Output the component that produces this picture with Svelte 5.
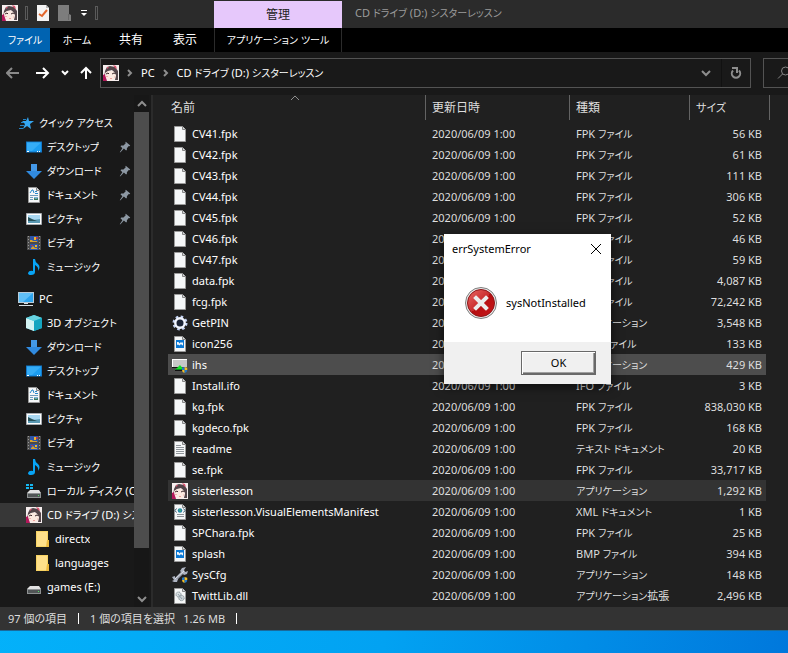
<script>
  // Quick access and drive tree on the left
  const quickAccess = [
    { label: 'デスクトップ', icon: 'desktop', pinned: true },
    { label: 'ダウンロード', icon: 'download', pinned: true },
    { label: 'ドキュメント', icon: 'document', pinned: true },
    { label: 'ピクチャ', icon: 'picture', pinned: true },
    { label: 'ビデオ', icon: 'video' },
    { label: 'ミュージック', icon: 'music' }
  ];

  const computer = [
    { label: '3D オブジェクト', icon: 'cube' },
    { label: 'ダウンロード', icon: 'download' },
    { label: 'デスクトップ', icon: 'desktop' },
    { label: 'ドキュメント', icon: 'document' },
    { label: 'ピクチャ', icon: 'picture' },
    { label: 'ビデオ', icon: 'video' },
    { label: 'ミュージック', icon: 'music' },
    { label: 'ローカル ディスク (C:)', icon: 'system' },
    { label: 'CD ドライブ (D:) シスターレッスン', icon: 'face', current: true },
    { label: 'directx', icon: 'folder', nested: true },
    { label: 'languages', icon: 'folder', nested: true },
    { label: 'games (E:)', icon: 'drive' },
    { label: 'home (\\\\Pan-Server)', icon: 'drive' }
  ];

  const date = '2020/06/09 1:00';
  const FPK = 'FPK ファイル';
  const APP = 'アプリケーション';

  const files = [
    { name: 'CV41.fpk', type: FPK, size: '56 KB', icon: 'file' },
    { name: 'CV42.fpk', type: FPK, size: '61 KB', icon: 'file' },
    { name: 'CV43.fpk', type: FPK, size: '111 KB', icon: 'file' },
    { name: 'CV44.fpk', type: FPK, size: '306 KB', icon: 'file' },
    { name: 'CV45.fpk', type: FPK, size: '52 KB', icon: 'file' },
    { name: 'CV46.fpk', type: FPK, size: '46 KB', icon: 'file' },
    { name: 'CV47.fpk', type: FPK, size: '59 KB', icon: 'file' },
    { name: 'data.fpk', type: FPK, size: '4,087 KB', icon: 'file' },
    { name: 'fcg.fpk', type: FPK, size: '72,242 KB', icon: 'file' },
    { name: 'GetPIN', type: APP, size: '3,548 KB', icon: 'gear' },
    { name: 'icon256', type: 'PNG ファイル', size: '133 KB', icon: 'image' },
    { name: 'ihs', type: APP, size: '429 KB', icon: 'installer', hover: true },
    { name: 'Install.ifo', type: 'IFO ファイル', size: '3 KB', icon: 'file' },
    { name: 'kg.fpk', type: FPK, size: '838,030 KB', icon: 'file' },
    { name: 'kgdeco.fpk', type: FPK, size: '168 KB', icon: 'file' },
    { name: 'readme', type: 'テキスト ドキュメント', size: '20 KB', icon: 'text' },
    { name: 'se.fpk', type: FPK, size: '33,717 KB', icon: 'file' },
    { name: 'sisterlesson', type: APP, size: '1,292 KB', icon: 'face', selected: true },
    { name: 'sisterlesson.VisualElementsManifest', type: 'XML ドキュメント', size: '1 KB', icon: 'xml' },
    { name: 'SPChara.fpk', type: FPK, size: '25 KB', icon: 'file' },
    { name: 'splash', type: 'BMP ファイル', size: '394 KB', icon: 'image' },
    { name: 'SysCfg', type: APP, size: '148 KB', icon: 'wrench' },
    { name: 'TwittLib.dll', type: 'アプリケーション拡張', size: '2,496 KB', icon: 'dll' }
  ];

  let dialogOpen = $state(true);

  function closeDialog() {
    dialogOpen = false;
  }

  // Katakana is set one size below latin and kanji, so cut a label into runs
  function runs(label) {
    return label.split(/([ァ-ヺー]+)/).filter((part) => part !== '');
  }
</script>

{#snippet text(label)}{#each runs(label) as part}{#if /^[ァ-ヺー]/.test(part)}<span class="kana">{part}</span>{:else}{part}{/if}{/each}{/snippet}

{#snippet sheet()}
  <path d="M2.5.5h8l3 3v12h-11z" fill="#f5f7f8" stroke="#9a9a9a" />
  <path d="M10.5.5v3h3" fill="#d5d8da" stroke="#858585" />
{/snippet}

{#snippet shield()}
  <path d="M8 9l3.500-1v4H8z" fill="#2478c8" />
  <path d="M11.500 8L15 9v3h-3.500z" fill="#f6bf26" />
  <path d="M8 12h3.500v4Q8 15 8 12z" fill="#f6bf26" />
  <path d="M11.500 12H15q0 3-3.500 4z" fill="#2478c8" />
{/snippet}

{#snippet icon(name)}
  <svg class="icon" viewBox="0 0 16 16" width="16" height="16" aria-hidden="true">
    {#if name === 'file'}
      {@render sheet()}
    {:else if name === 'text'}
      {@render sheet()}
      <path d="M4 4.500h5M4 6.500h8M4 8.500h8M4 10.500h8M4 12.500h8" stroke="#8e9499" />
    {:else if name === 'image'}
      {@render sheet()}
      <path d="M4 4h8v8H4z" fill="#0a78d4" />
      <path d="M5 6l1.500 0 1 1.500L9 6l1 1 1-1v3.500L10 9 9 8 7.500 9.500 6 8.500 5 9z" fill="#f2f8fd" />
    {:else if name === 'xml'}
      {@render sheet()}
      <path d="M4.500 4.500L3 6.500l1.500 2M11.500 4.500l1.500 2-1.500 2" fill="none" stroke="#39576d" />
      <circle cx="8" cy="6.500" r="2.300" fill="#2887a8" />
      <path d="M7 5l2 1-1 2z" fill="#4cbf6b" />
      <path d="M5 10.500h7M5 12.500h7" stroke="#8c9196" />
    {:else if name === 'dll'}
      {@render sheet()}
      <circle cx="6.500" cy="6.500" r="2.500" fill="#d9dfe2" stroke="#7c8990" stroke-dasharray="1 .5" />
      <circle cx="9.500" cy="10" r="2.700" fill="#cbd2d6" stroke="#7c8990" stroke-dasharray="1 .5" />
      <path d="M6 6l4 5" stroke="#8fa0aa" />
    {:else if name === 'gear'}
      <circle cx="8" cy="8" r="6" fill="none" stroke="#c3d2f4" stroke-width="3" stroke-dasharray="2.400 2.300" />
      <circle cx="8" cy="8" r="4.700" fill="#1b2437" stroke="#f1f5ff" stroke-width="2.400" />
    {:else if name === 'installer'}
      <path d="M0 2h15v8H0z" fill="#c7c7c7" />
      <path d="M0 2h15v1H1v7H0z" fill="#fff" />
      <path d="M0 10h10v1H0zM3 13h9v1H3z" fill="#111" />
      <path d="M3 13l5-5 4 5z" fill="#14e326" />
      <path d="M4 12h8v1H3z" fill="#098a21" />
      <g transform="translate(4 4) scale(.75)">
        {@render shield()}
      </g>
    {:else if name === 'wrench'}
      <path d="M3 13L12 4" stroke="#959ba9" stroke-width="3" />
      <path d="M10 1l4-1-2 3 1 2 3-1-1 3-3 1-4-4zM0 10l3-1 0 2 1 1 2 0-1 3-3 0-2-1 2-1z" fill="#aeb4c2" />
      <path d="M3 12L12 4" stroke="#e0e3ea" />
      <g transform="translate(4 4) scale(.75)">
        {@render shield()}
      </g>
    {:else if name === 'face'}
      <path d="M0 0h16v16H0z" fill="#f6eeee" />
      <path d="M2 6L4 2l3-1 5 1 3 4v9h-3l1-6-4-4-4 1-3 4-1 3z" fill="#54454a" />
      <path d="M0 10l2-1 2 7H0z" fill="#b3175a" />
      <path d="M4 2l2 0-2 2zM10 0l3 1 1 3-2-1z" fill="#d95470" />
      <path d="M2 8l3-2 5 0 3 4-1 4-5 2-4-3z" fill="#fce9e1" />
      <path d="M3 9l2-1 1 1M9 9l2-1 2 1" fill="none" stroke="#3d292d" />
      <path d="M3 11.500h2M11 12h1" stroke="#f6b4ae" />
      <path d="M7 13h2l-1 1z" fill="#dd575a" />
    {:else if name === 'desktop'}
      <path d="M0 2.500h16v11H0z" fill="#1378c9" />
      <path d="M1 3.500h14v9H1z" fill="#1c9ef2" />
      <path d="M1 3.500h14L6 12H1z" fill="#35adf7" />
      <path d="M1 12.500h2M11 12.500h1M13 12.500h1" stroke="#fff" />
    {:else if name === 'download'}
      <path d="M5 1h6v7h5l-8 8-8-8h5z" fill="#318be0" />
      <path d="M5 1h6v7H5z" fill="#52a4ec" opacity=".6" />
    {:else if name === 'document'}
      {@render sheet()}
      <path d="M4 6l2-3h1l1 3M9 4.500h2M9 6.500h3" fill="none" stroke="#2487cb" />
      <path d="M4 8.500h8M4 10.500h3M4 12.500h3" stroke="#6d9dbe" />
      <path d="M8 10h4v3H8z" fill="#7ab1d4" />
      <path d="M8 11l2 1 2-1v2H8z" fill="#36795a" />
    {:else if name === 'picture'}
      <path d="M.5 2.500h15v11H.5z" fill="#fff" stroke="#a6abb0" />
      <path d="M2 4h12v8H2z" fill="#a9d8f2" />
      <path d="M2 9l5 0 7-1v4H2z" fill="#5b9ab4" />
      <path d="M2 6l4 2 5 2H2z" fill="#28535b" />
    {:else if name === 'video'}
      <path d="M1 1h14v14H1z" fill="#4b4b4b" />
      <path d="M2.500 1v14M13.500 1v14" stroke="#9a9a9a" stroke-dasharray="1 2" />
      <path d="M4 1h8v6H4zM4 9h8v6H4z" fill="#2e56a8" />
      <path d="M4 5h2l1 1h4v1H4zM5 13l2-2 2 2 2 0v1H5z" fill="#d9a02c" />
      <path d="M8 2h2v3H8zM9 10h2v2H9z" fill="#efb52c" />
      <path d="M10 2h2v2h-2zM5 10h2v1H5z" fill="#af3850" />
    {:else if name === 'music'}
      <path d="M7 0h2q0 3 3 5 3 3 0 7 1-4-3-6v7q0 3-4 3-3 0-3-2 1-3 5-2z" fill="#08a4f5" />
    {:else if name === 'cube'}
      <path d="M8 0l8 3v10l-8 3-8-3V3z" fill="#36bfd3" />
      <path d="M0 3l8 3v10l-8-3z" fill="#d3f3f3" />
      <path d="M8 0l8 3-8 3-8-3z" fill="#67d3e0" />
      <path d="M8 6l8-3v10l-8 3z" fill="#15a5c0" />
    {:else if name === 'star'}
      <path d="M10 2l1 4 5 0-4 3 1 5-4-3-4 3 2-5-3-3 4 0z" fill="#35a6f0" />
      <path d="M5 4.500h3M3 7.500h3M2 10.500h4M1 13.500h4" stroke="#2482c4" />
    {:else if name === 'pc'}
      <path d="M0 1h16v11H0z" fill="#b8cad6" />
      <path d="M1 2h14v9H1z" fill="#2da4ee" />
      <path d="M1 2h14L5 11H1z" fill="#60bff6" />
      <path d="M6 12h4v1H6zM1 14h14v1H1z" fill="#d8e1e7" />
    {:else if name === 'drive' || name === 'system'}
      {#if name === 'system'}
        <path d="M0 1h3v2H0zM4 1h3v2H4zM0 4h3v2H0zM4 4h3v2H4z" fill="#16b6ef" />
      {/if}
      <path d="M4 7h9l2 3H1z" fill="#e2e2e2" />
      <path d="M1 10h14v5H1z" fill="#8e9192" />
      <path d="M2 11h12v3H2z" fill="#515556" />
      <path d="M12 12h1v1h-1z" fill="#55e467" />
    {:else if name === 'folder'}
      <path d="M0 0h12v16H0z" fill="#f8d464" />
      <path d="M1 1h10v14H1z" fill="#ffe08a" />
      <path d="M11 9h2v7h-3z" fill="#edba3f" />
    {:else if name === 'pin'}
      <path d="M9 1l6 5-1 1-1-.5-2.500 3v2l-1 1-3-2.500L2 15l-1 0 3.500-5.500L2 7l1-1h3l3-3-.5-1z" fill="#8d98a3" />
    {/if}
  </svg>
{/snippet}

{#snippet chevron(dir)}
  <svg class="chevron" viewBox="0 0 10 10" width="10" height="10" aria-hidden="true">
    {#if dir === 'up'}
      <path d="M1 7l4-4 4 4" />
    {:else if dir === 'right'}
      <path d="M3 2l3 3-3 3" />
    {:else}
      <path d="M1 3l4 4 4-4" />
    {/if}
  </svg>
{/snippet}

{#snippet treeItem(item)}
  <li>
    <a href="#top" class="tree-item" class:nested={item.nested} class:current={item.current}>
      {@render icon(item.icon)}
      <span class="tree-label">{@render text(item.label)}</span>
      {#if item.pinned}
        <span class="pin">{@render icon('pin')}</span>
      {/if}
    </a>
  </li>
{/snippet}

<div class="desktop">
  <div class="explorer">
    <header class="titlebar">
      <div class="quick-tools">
        {@render icon('face')}
        <span class="grip"></span>
        <button class="tool" aria-label="プロパティ">
          <svg viewBox="0 0 12 16" width="12" height="16">
            <path d="M0 0h9l3 3v13H0z" fill="#f4f4f4" />
            <path d="M9 0v3h3" fill="#b9b9b9" />
            <path d="M2 9l3 2 5-6" fill="none" stroke="#e2662c" stroke-width="2" />
          </svg>
        </button>
        <button class="tool" aria-label="新しいフォルダー">
          <svg viewBox="0 0 13 16" width="13" height="16">
            <path d="M0 0h11v9l2 1v6H0z" fill="#7d7d7d" />
            <path d="M10.500 9v6" stroke="#686868" />
          </svg>
        </button>
        <button class="tool" aria-label="カスタマイズ">
          <svg viewBox="0 0 8 8" width="8" height="8">
            <path d="M1 1.500h6" stroke="#fff" />
            <path d="M1 4h6L4 7z" fill="#fff" />
          </svg>
        </button>
        <span class="grip"></span>
      </div>
      <div class="context-tab">管理</div>
      <div class="title">{@render text('CD ドライブ (D:) シスターレッスン')}</div>
    </header>

    <nav class="ribbon">
      <button class="file-tab">ファイル</button>
      <button class="tab">{@render text('ホーム')}</button>
      <button class="tab">共有</button>
      <button class="tab">表示</button>
      <button class="tool-tab">{@render text('アプリケーション ツール')}</button>
    </nav>

    <div class="navbar">
      <div class="history">
        <button class="arrow dim" aria-label="戻る">
          <svg viewBox="0 0 14 12" width="14" height="12"><path d="M13 6H2M6 1L1 6l5 5" /></svg>
        </button>
        <button class="arrow" aria-label="進む">
          <svg viewBox="0 0 14 12" width="14" height="12"><path d="M0 6h12M7 1l5 5-5 5" /></svg>
        </button>
        <button class="arrow" aria-label="最近表示した場所">
          <svg viewBox="0 0 8 8" width="8" height="8"><path d="M1 2l3 3 3-3" /></svg>
        </button>
        <button class="arrow" aria-label="上へ">
          <svg viewBox="0 0 12 14" width="12" height="14"><path d="M6 13V2M1 7l5-5 5 5" /></svg>
        </button>
      </div>
      <div class="address">
        {@render icon('face')}
        {@render chevron('right')}
        <a href="#top">PC</a>
        {@render chevron('right')}
        <a href="#top">{@render text('CD ドライブ (D:) シスターレッスン')}</a>
        <button class="drop" aria-label="以前の場所">{@render chevron('down')}</button>
        <button class="refresh" aria-label="最新の情報に更新">
          <svg viewBox="0 0 12 12" width="12" height="12">
            <path d="M3 3.500a4.200 4.200 0 1 0 6 0" fill="none" stroke="#8e8e8e" stroke-width="2" />
            <path d="M2 1h5v5" fill="none" stroke="#8e8e8e" stroke-width="2" />
          </svg>
        </button>
      </div>
      <button class="search" aria-label="検索">
        <svg viewBox="0 0 14 14" width="14" height="14">
          <circle cx="8.500" cy="5" r="4" fill="none" stroke="#858585" />
          <path d="M5.500 8L1 12.500" stroke="#858585" />
        </svg>
      </button>
    </div>

    <div class="body">
      <aside class="sidebar">
        <div class="tree">
          <a href="#top" class="tree-item root">
            {@render icon('star')}
            <span class="tree-label">{@render text('クイック アクセス')}</span>
          </a>
          <ul>
            {#each quickAccess as item}
              {@render treeItem(item)}
            {/each}
          </ul>
          <a href="#top" class="tree-item root second">
            {@render icon('pc')}
            <span class="tree-label">PC</span>
          </a>
          <ul>
            {#each computer as item}
              {@render treeItem(item)}
            {/each}
          </ul>
        </div>
        <div class="scrollbar">
          <span class="scroll-end">{@render chevron('up')}</span>
          <span class="thumb"></span>
          <span class="scroll-end">{@render chevron('down')}</span>
        </div>
      </aside>

      <main class="files">
        <table>
          <colgroup>
            <col class="col-name" />
            <col class="col-date" />
            <col class="col-type" />
            <col class="col-size" />
          </colgroup>
          <thead>
            <tr>
              <th>名前<span class="sort">{@render chevron('up')}</span></th>
              <th>更新日時</th>
              <th>種類</th>
              <th>{@render text('サイズ')}</th>
            </tr>
          </thead>
          <tbody>
            {#each files as file}
              <tr class:hover={file.hover} class:selected={file.selected}>
                <td><span class="file-name">{@render icon(file.icon)}{file.name}</span></td>
                <td>{date}</td>
                <td>{@render text(file.type)}</td>
                <td class="size">{file.size}</td>
              </tr>
            {/each}
          </tbody>
        </table>
      </main>
    </div>

    <footer class="statusbar">
      <span class="status">97 個の項目</span>
      <span class="status">1 個の項目を選択&ensp; 1.26 MB</span>
    </footer>
  </div>

  {#if dialogOpen}
    <div class="dialog" role="alertdialog" aria-labelledby="dialog-title" aria-describedby="dialog-text">
      <div class="dialog-head">
        <span id="dialog-title">errSystemError</span>
        <button class="close" aria-label="閉じる" onclick={closeDialog}>
          <svg viewBox="0 0 12 12" width="12" height="12"><path d="M1 1l10 10M11 1L1 11" stroke="#000" /></svg>
        </button>
      </div>
      <div class="dialog-body">
        <svg viewBox="0 0 32 32" width="32" height="32" aria-hidden="true">
          <defs>
            <linearGradient id="red" x1="0" y1="0" x2="1" y2="1">
              <stop offset="0" stop-color="#e86a66" />
              <stop offset=".5" stop-color="#c92a2b" />
              <stop offset=".5" stop-color="#b50d10" />
              <stop offset="1" stop-color="#c8191b" />
            </linearGradient>
          </defs>
          <circle cx="16" cy="16" r="15.500" fill="#e9e9e9" stroke="#7e7e7e" />
          <circle cx="16" cy="16" r="13.500" fill="url(#red)" stroke="#8f1517" />
          <path d="M11 11l10 10M21 11l-10 10" stroke="#ececec" stroke-width="4" stroke-linecap="square" />
        </svg>
        <span id="dialog-text">sysNotInstalled</span>
      </div>
      <div class="dialog-foot">
        <button class="ok" onclick={closeDialog}>OK</button>
      </div>
    </div>
  {/if}
</div>

<style>
  :global(body) {
    margin: 0;
    overflow: hidden;
    background: linear-gradient(100deg, #04b5fc 0%, #02a2f2 55%, #0078dc 100%);
  }

  .desktop {
    position: relative;
    min-height: 100vh;
    font-family: "Noto Sans", "Noto Sans CJK JP", sans-serif;
    font-size: 11px;
    line-height: 16px;
    font-feature-settings: "palt";
    color: #fff;
  }

  .kana {
    font-size: 10px;
  }

  .explorer {
    background: #191919;
    border-bottom: 1px solid #1a6a9c;
  }

  button {
    padding: 0;
    border: none;
    background: none;
    color: inherit;
    font: inherit;
    font-feature-settings: inherit;
  }

  a {
    color: inherit;
    text-decoration: none;
  }

  ul {
    margin: 0;
    padding: 0;
    list-style: none;
  }

  svg {
    display: block;
    flex-shrink: 0;
  }

  .chevron path {
    fill: none;
    stroke: #8e8e8e;
    stroke-width: 2;
  }

  /* Title bar */
  .titlebar {
    display: flex;
    height: 28px;
    background: #2b2b2b;
    color: #9b9b9b;
  }

  .quick-tools {
    display: flex;
    align-items: center;
    box-sizing: border-box;
    width: 214px;
    padding: 0 2px 2px;
    gap: 7px;
  }

  .grip {
    width: 1px;
    height: 12px;
    border: 1px solid #5a5a5a;
  }

  .tool {
    margin-left: 2px;
  }

  .context-tab {
    width: 128px;
    margin-top: 1px;
    background: #e6c8fb;
    color: #222;
    font-size: 12px;
    line-height: 27px;
    text-align: center;
  }

  .title {
    padding-left: 13px;
    line-height: 26px;
  }

  /* Ribbon tabs */
  .ribbon {
    display: flex;
    height: 24px;
    background: #000;
  }

  .file-tab {
    width: 50px;
    background: #0063b1;
    font-size: 10px;
  }

  .tab {
    width: 54px;
    font-size: 12px;
  }

  .tool-tab {
    width: 128px;
    margin-left: 2px;
    border: solid #2b2b2b;
    border-width: 0 1px;
  }

  /* Address row */
  .navbar {
    display: flex;
    height: 30px;
    padding: 6px 0 7px;
  }

  .history {
    display: flex;
    align-items: center;
    gap: 11px;
    box-sizing: border-box;
    width: 100px;
    padding-left: 6px;
  }

  .arrow path {
    fill: none;
    stroke: #fff;
    stroke-width: 2;
  }

  .dim {
    margin-right: 5px;
  }

  .dim path {
    stroke: #8a8a8a;
  }

  .address {
    display: flex;
    flex: 1;
    align-items: center;
    gap: 6px;
    padding-left: 2px;
    border: 1px solid #535353;
  }

  .drop {
    margin-left: auto;
    padding-right: 4px;
  }

  .refresh {
    display: flex;
    align-items: center;
    justify-content: center;
    align-self: stretch;
    width: 29px;
    border-left: 1px solid #111;
  }

  .search {
    width: 25px;
    margin-left: 12px;
    padding-left: 13px;
    border: 1px solid #535353;
    border-right: none;
    overflow: hidden;
  }

  .body {
    display: flex;
  }

  /* Folder tree: as tall as the file list, the rest is clipped */
  .sidebar {
    display: flex;
    width: 149px;
    contain: size;
    overflow: hidden;
  }

  .tree {
    flex: 1;
    min-width: 0;
    padding-top: 16px;
    overflow: hidden;
  }

  .tree-item {
    display: flex;
    align-items: center;
    gap: 5px;
    height: 24px;
    padding-left: 26px;
    white-space: nowrap;
  }

  .root {
    padding-left: 18px;
  }

  .second {
    margin-top: 8px;
  }

  .nested {
    padding-left: 36px;
    gap: 3px;
  }

  .current {
    background: #373737;
  }

  .tree-label {
    overflow: hidden;
  }

  .pin {
    margin-left: auto;
    padding-right: 3px;
  }

  .pin .icon {
    width: 12px;
    height: 12px;
  }

  .scrollbar {
    display: flex;
    flex-direction: column;
    align-items: center;
    width: 15px;
    background: #171717;
  }

  .scroll-end {
    padding: 4px 0 3px;
  }

  .thumb {
    width: 15px;
    height: 436px;
    margin-bottom: auto;
    background: #4d4d4d;
  }

  /* File list */
  .files {
    flex: 1;
    margin-left: 2px;
    padding: 0 0 1px 15px;
    border-left: 2px solid #2b2b2b;
    background: #202020;
  }

  table {
    width: 602px;
    border-collapse: separate;
    border-spacing: 0;
    table-layout: fixed;
  }

  .col-name {
    width: 258px;
  }

  .col-date {
    width: 144px;
  }

  .col-type {
    width: 120px;
  }

  .col-size {
    width: 80px;
  }

  th {
    position: relative;
    height: 25px;
    padding: 0 0 0 6px;
    border-right: 1px solid #636363;
    font-size: 12px;
    font-weight: 400;
    text-align: left;
    color: #dedede;
  }

  th .kana {
    font-size: 11px;
  }

  th:first-child {
    padding-left: 3px;
  }

  .sort {
    position: absolute;
    top: -2px;
    left: 122px;
  }

  .sort .chevron path {
    stroke-width: 1;
  }

  thead::after {
    content: "";
    display: block;
    height: 3px;
  }

  td {
    height: 21px;
    padding: 0 0 0 6px;
    color: #dedede;
    white-space: nowrap;
  }

  td:first-child {
    padding-left: 4px;
    color: #fff;
  }

  .file-name {
    display: flex;
    align-items: center;
    gap: 4px;
  }

  /* row highlight stops just short of the column edge */
  .size {
    padding: 0 4px 0 0;
    border-right: 4px solid transparent;
    background-clip: padding-box;
    text-align: right;
  }

  .hover td {
    background-color: #4d4d4d;
  }

  .selected td {
    background-color: #333;
  }

  /* Status bar */
  .statusbar {
    display: flex;
    align-items: center;
    height: 23px;
    padding-left: 8px;
    background: #333;
    color: #dedede;
  }

  .status {
    margin-right: 11px;
    padding-right: 11px;
    border-right: 1px solid #fff;
    line-height: 11px;
  }

  /* Error dialog */
  .dialog {
    position: absolute;
    top: 234px;
    left: 444px;
    width: 167px;
    background: #fff;
    color: #000;
    box-shadow: 0 3px 10px rgba(0, 0, 0, 0.6);
  }

  .dialog-head {
    display: flex;
    align-items: center;
    justify-content: space-between;
    height: 29px;
    padding: 0 9px 0 8px;
  }

  .dialog-body {
    display: flex;
    align-items: center;
    gap: 9px;
    height: 79px;
    padding-left: 21px;
  }

  .dialog-foot {
    display: flex;
    justify-content: flex-end;
    padding: 9px 15px;
    background: #f0f0f0;
  }

  .ok {
    width: 75px;
    height: 24px;
    border: 1px solid #696969;
    background: #f0f0f0;
    box-shadow: inset 1px 1px #fff, inset -1px -1px #696969, inset -2px -2px #a0a0a0;
  }
</style>
